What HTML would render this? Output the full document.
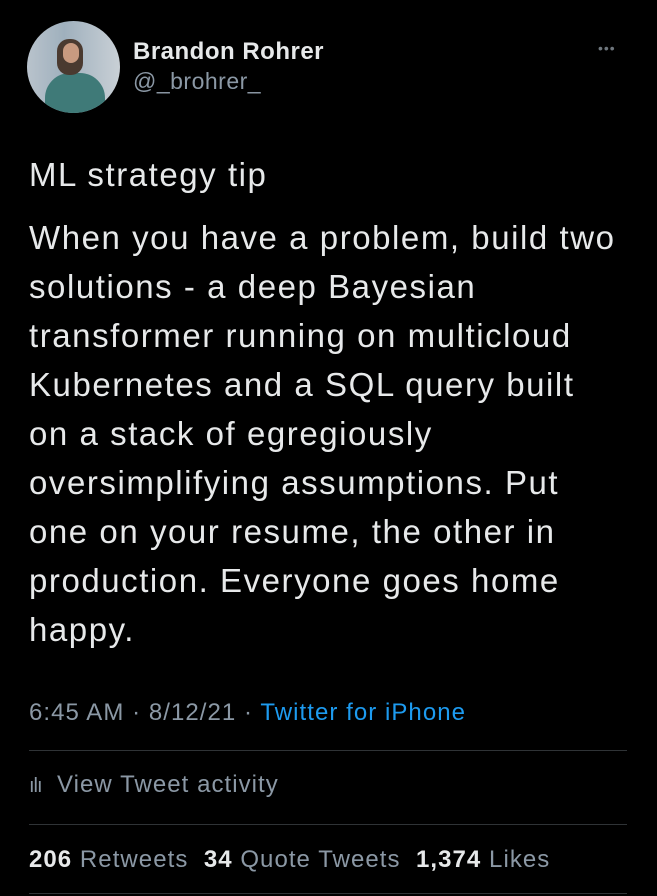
<!DOCTYPE html>
<html><head><meta charset="utf-8"><style>
body{margin:0;background:#000;width:657px;height:896px;overflow:hidden;font-family:"Liberation Sans",sans-serif;color:#e7e9ea;position:relative}
.a{position:absolute;white-space:nowrap}
.av{left:27px;top:21px;width:93px;height:92px;border-radius:50%;background:linear-gradient(90deg,#b9c3cc 0%,#9fb0bd 40%,#c9d0d6 100%);overflow:hidden}
.body{left:29px;font-size:33px;line-height:49px;letter-spacing:1.55px;color:#e7e9ea}
.hr{position:absolute;left:29px;width:598px;height:1px;background:#2f3336}
.g{color:#8b98a5}
.s{font-size:24px;letter-spacing:1.05px}
</style></head><body>
<div class="a av">
<div style="position:absolute;left:18px;top:52px;width:60px;height:50px;border-radius:25px 25px 0 0;background:#3f7a78"></div>
<div style="position:absolute;left:30px;top:18px;width:26px;height:36px;border-radius:12px;background:#4a3a30"></div>
<div style="position:absolute;left:36px;top:22px;width:16px;height:20px;border-radius:8px;background:#c89a80"></div>
</div>
<div class="a" style="left:133px;top:38px;font-size:24px;font-weight:bold;color:#e7e9ea;letter-spacing:0.5px">Brandon Rohrer</div>
<div class="a g" style="left:133px;top:68px;font-size:23px;letter-spacing:0.5px">@_brohrer_</div>
<div class="a" style="left:598px;top:40px;font-size:14px;color:#6e767d;letter-spacing:1px">•••</div>
<div class="a body" style="top:150px">ML strategy tip</div>
<div class="a body" style="top:213px">When you have a problem, build two<br>solutions - a deep Bayesian<br>transformer running on multicloud<br>Kubernetes and a SQL query built<br>on a stack of egregiously<br>oversimplifying assumptions. Put<br>one on your resume, the other in<br>production. Everyone goes home<br>happy.</div>
<div class="a g s" style="left:29px;top:699px">6:45 AM · 8/12/21 · <span style="color:#1d9bf0">Twitter for iPhone</span></div>
<div class="hr" style="top:750px"></div>
<div class="a g s" style="left:29px;top:771px"><span style="font-size:20px;letter-spacing:-1px">ılı</span>&nbsp;&nbsp;View Tweet activity</div>
<div class="hr" style="top:824px"></div>
<div class="a g s" style="left:29px;top:846px"><b style="color:#e7e9ea">206</b> Retweets&nbsp; <b style="color:#e7e9ea">34</b> Quote Tweets&nbsp; <b style="color:#e7e9ea">1,374</b> Likes</div>
<div class="hr" style="top:893px"></div>
</body></html>
